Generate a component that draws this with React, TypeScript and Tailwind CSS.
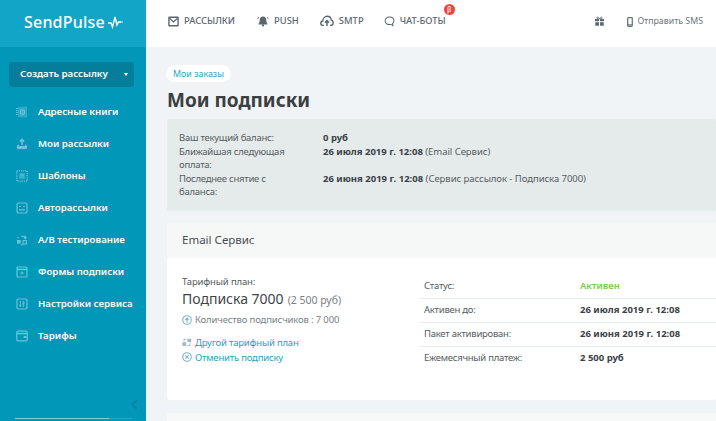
import React from "react";

const F = { fontFamily: '"Noto Sans","Open Sans",sans-serif' };

type IP = { className?: string };
const Svg = ({ w = 12, h = 12, vb = "0 0 12 12", className, children }: any) => (
  <svg width={w} height={h} viewBox={vb} fill="none" stroke="currentColor" className={"shrink-0 " + (className || "")}>{children}</svg>
);

const BookI = ({ className }: IP) => (
  <Svg className={className}><rect x="2" y="0.8" width="9" height="10.4" fill="currentColor" fillOpacity=".45" stroke="none" /><path d="M1 2v8" strokeWidth="1.6" strokeDasharray="1 1" /><circle cx="6.5" cy="6" r="2.2" strokeWidth="1.1" /><circle cx="6.5" cy="6" r=".7" fill="currentColor" stroke="none" /></Svg>
);
const TrayI = ({ className }: IP) => (
  <Svg className={className}><path d="M6 7V1.5M3.8 3.6 6 1.4l2.2 2.2" strokeWidth="1.5" /><path d="M2.4 6 .8 8.2v1.4c0 .8.6 1.4 1.4 1.4h7.6c.8 0 1.4-.6 1.4-1.4V8.2L9.6 6 9 8H3z" fill="currentColor" stroke="none" /></Svg>
);
const TplI = ({ className }: IP) => (
  <Svg className={className}><rect x=".8" y=".8" width="10.4" height="10.4" strokeWidth="1.3" strokeDasharray="1.2 .9" /><rect x="3.2" y="3.2" width="5.6" height="5.6" fill="currentColor" fillOpacity=".55" stroke="none" /><path d="M5 5h3" strokeWidth=".8" /></Svg>
);
const AutoI = ({ className }: IP) => (
  <Svg className={className}><rect x="1" y="1" width="10" height="10" rx="1.4" strokeWidth="1.2" /><path d="M3.2 4.5h1.6M7.2 4.5h1.6M3.2 7.8h5.6" strokeWidth="1.2" /></Svg>
);
const AbI = ({ className }: IP) => (
  <Svg className={className}><rect x="1" y="6" width="3.6" height="3.6" fill="currentColor" stroke="none" /><rect x="7" y="6.6" width="3.4" height="3.4" strokeWidth="1.1" /><path d="M5 2.2h4.2v2M7.8 3.2l1.4 1.4 1.4-1.4M2 4.4V3" strokeWidth="1.1" /><path d="M4.8 10.8h2" strokeWidth="1.1" /></Svg>
);
const FormI = ({ className }: IP) => (
  <Svg className={className}><rect x="1" y="1" width="10" height="10" rx="1" strokeWidth="1.2" /><path d="M1 3.4h10" strokeWidth="1.5" /><path d="M6 5.4v3.2M4.4 7h3.2" strokeWidth="1.1" /></Svg>
);
const SetI = ({ className }: IP) => (
  <Svg className={className}><rect x="1" y="1" width="10" height="10" rx="1.2" strokeWidth="1.2" /><path d="M4.4 3v6M7.6 3v6" strokeWidth="1" /><path d="M3.4 7h2M6.6 5h2" strokeWidth="1.1" /></Svg>
);
const WalletI = ({ className }: IP) => (
  <Svg className={className}><rect x=".8" y="1.2" width="10.4" height="9.6" rx="1" strokeWidth="1.2" /><path d="M.8 3.6h10.4" strokeWidth="1.4" /><rect x="7.6" y="6" width="3" height="2" fill="currentColor" stroke="none" /></Svg>
);

const MailI = ({ className }: IP) => (
  <Svg className={className} w={11} h={11}><rect x="1" y="1.4" width="10" height="9.2" rx=".6" strokeWidth="1.5" /><path d="M1.6 2.4 6 6.6l4.4-4.2" strokeWidth="1.3" /></Svg>
);
const BellI = ({ className }: IP) => (
  <Svg className={className} w={12} h={12}><path d="M6 1.4c-2 0-3.2 1.5-3.2 3.4 0 2-.6 3-1.2 3.9v.8h8.8v-.8c-.6-.9-1.2-1.9-1.2-3.9C9.2 2.9 8 1.4 6 1.4Z" fill="currentColor" stroke="none" /><circle cx="6" cy="10.4" r="1.1" fill="currentColor" stroke="none" /><path d="M1.8 2.2.8 3.8M10.2 2.2l1 1.6" strokeWidth="1" /></Svg>
);
const CloudI = ({ className }: IP) => (
  <Svg className={className} w={14} h={12} vb="0 0 14 12"><path d="M4 10.4H3C1.6 10.4.8 9.4.8 8.2c0-1.2.8-2.1 2-2.2C3 3.4 5 1.2 7.2 1.2c2.2 0 3.8 1.600 4 3.800 1.200.3 2 1.400 2 2.700 0 1.500-1 2.700-2.500 2.700H10" strokeWidth="1.4" /><path d="M7 11V5.600M5 7.600l2-2 2 2" strokeWidth="1.5" /></Svg>
);
const ChatI = ({ className }: IP) => (
  <Svg className={className} w={11} h={11}><path d="M6 1.2C3.2 1.2 1.2 3 1.2 5.3S3.2 9.4 6 9.4c.6 0 1.200-.1 1.700-.2l1.900 1.300-.3-2.200c1-.8 1.500-1.900 1.500-3C10.800 3 8.800 1.200 6 1.200Z" strokeWidth="1.1" /></Svg>
);
const GiftI = ({ className }: IP) => (
  <Svg className={className} w={11} h={11}><rect x="1" y="3.3" width="4.4" height="2.4" fill="currentColor" stroke="none" /><rect x="6.6" y="3.3" width="4.4" height="2.4" fill="currentColor" stroke="none" /><rect x="1.4" y="6.8" width="4" height="3.8" fill="currentColor" stroke="none" /><rect x="6.6" y="6.8" width="4" height="3.8" fill="currentColor" stroke="none" /><path d="M6 3C4.5.6 2.8 1 3 2.2c.1.7 1.500.9 3 .8Zm0 0c1.500-2.400 3.200-2 3-.8-.1.7-1.500.9-3 .8Z" strokeWidth=".9" /></Svg>
);
const PhoneI = ({ className }: IP) => (
  <Svg className={className} w={6} h={10} vb="0 0 6 10"><rect x=".7" y=".7" width="4.6" height="8.600" rx=".7" strokeWidth="1.300" /><path d="M.8 7.900h4.400" strokeWidth="1.200" /></Svg>
);
const UpI = ({ className }: IP) => (
  <Svg className={className} w={10} h={10} vb="0 0 10 10"><circle cx="5" cy="5" r="4.3" strokeWidth="1.1" /><path d="M5 7.600V3.400M3.400 4.800 5 3.100l1.600 1.700" strokeWidth="1.2" /></Svg>
);
const XI = ({ className }: IP) => (
  <Svg className={className} w={10} h={10} vb="0 0 10 10"><circle cx="5" cy="5" r="4.3" strokeWidth="1.1" /><path d="M3.400 3.400l3.200 3.200M6.600 3.400 3.400 6.600" strokeWidth="1.2" /></Svg>
);
const SwapI = ({ className }: IP) => (
  <Svg className={className} w={10} h={10} vb="0 0 10 10"><rect x=".4" y="5.200" width="3.800" height="3.800" fill="currentColor" stroke="none" /><rect x="5.400" y="1.800" width="3.800" height="3.400" fill="currentColor" stroke="none" /><path d="M2 4.400V2.200h2.400M8 6.200v2.200H5.400" strokeWidth="1" /></Svg>
);

const menu: [React.ComponentType<IP>, string][] = [
  [BookI, "Адресные книги"],
  [TrayI, "Мои рассылки"],
  [TplI, "Шаблоны"],
  [AutoI, "Авторассылки"],
  [AbI, "A/B тестирование"],
  [FormI, "Формы подписки"],
  [SetI, "Настройки сервиса"],
  [WalletI, "Тарифы"],
];

const top: [React.ComponentType<IP>, string, string][] = [
  [MailI, "РАССЫЛКИ", "mr-[22px]"],
  [BellI, "PUSH", "mr-[21px]"],
  [CloudI, "SMTP", "mr-[20px]"],
  [ChatI, "ЧАТ-БОТЫ", "mr-[20px]"],
];

const balance: [string, string, string][] = [
  ["Ваш текущий баланс:", "0 руб", ""],
  ["Ближайшая следующая оплата:", "26 июля 2019 г. 12:08", " (Email Сервис)"],
  ["Последнее снятие с баланса:", "26 июня 2019 г. 12:08", " (Сервис рассылок - Подписка 7000)"],
];

const stats: [string, string, boolean][] = [
  ["Статус:", "Активен", true],
  ["Активен до:", "26 июля 2019 г. 12:08", false],
  ["Пакет активирован:", "26 июня 2019 г. 12:08", false],
  ["Ежемесячный платеж:", "2 500 руб", false],
];

export default function App() {
  return (
    <div style={F} className="flex h-[421px] w-[716px] overflow-hidden bg-[#f1f4f6]">
      <aside className="relative flex w-[146px] shrink-0 flex-col bg-[#0097b8]">
        <div className="flex h-[47px] items-center gap-[3px] bg-[#12a5c8] pb-[4px] pl-[24px] text-[16px] font-medium tracking-[0.2px] text-white">
          SendPulse
          <svg width="15" height="14" viewBox="0 0 15 14" fill="none" stroke="white" strokeWidth="1.4"><path d="M0 8h3l1.500 4L7 2l2 8 1.500-3H13" /><circle cx="14" cy="7" r=".8" fill="white" stroke="none" /></svg>
        </div>
        <div className="px-[9px] pt-[15px]">
          <div className="flex h-[25px] w-[125px] items-center justify-between rounded-[3px] bg-[#057e9c] pl-[11px] pr-[6px] text-[9.7px] font-semibold text-white">
            Создать рассылку
            <span className="h-0 w-0 border-x-[2.5px] border-t-[3px] border-x-transparent border-t-white" />
          </div>
        </div>
        <nav className="mt-[9px] flex flex-col">
          {menu.map(([I, t]) => (
            <div key={t} className="flex h-[32px] items-center pl-[16px] text-[9.7px] font-semibold text-white">
              <I className="mr-[10px] text-[#6fc2d8]" />
              {t}
            </div>
          ))}
        </nav>
        <svg width="7" height="11" viewBox="0 0 7 11" fill="none" stroke="#057e9c" strokeWidth="1.6" className="absolute bottom-[11px] right-[8px]"><path d="M6 1 1.500 5.500 6 10" /></svg>
        <div className="absolute bottom-[2px] left-[15px] h-[1px] w-[117px] bg-[#2aa8c6]">
          <div className="h-full w-[94px] bg-[#7fcde0]" />
        </div>
      </aside>
      <div className="flex min-w-0 flex-1 flex-col">
        <header className="flex h-[47px] shrink-0 items-center bg-white pb-[4px] pl-[22px] pr-[13px] text-[#5b6670]">
          {top.map(([I, t, m], i) => (
            <div key={t} className={"relative flex items-center gap-[5px] text-[9.4px] font-medium " + m}>
              <I />
              {t}
              {i === 3 && (
                <span className="absolute -top-[10px] -right-[9px] flex h-[11px] w-[11px] items-center justify-center rounded-full bg-[#f0413f] text-[7px] text-white">β</span>
              )}
            </div>
          ))}
          <GiftI className="ml-auto mr-[22px]" />
          <div className="flex items-center gap-[4px] text-[8.8px] text-[#6b757d]">
            <PhoneI />
            Отправить SMS
          </div>
        </header>
        <main className="min-w-0 flex-1 overflow-hidden pl-[21px] pt-[18px]">
          <span className="-ml-[1px] flex h-[17px] w-fit items-center rounded-full bg-white px-[7px] text-[8.9px] text-[#2ba7c4]">Мои заказы</span>
          <h1 className="mt-[5px] text-[19px] leading-[27px] font-bold text-[#3a3f42]">Мои подписки</h1>
          <section className="mt-[5px] rounded-[3px] bg-[#e5ebeb] pt-[12px] pb-[12px] pl-[12px] text-[9.5px] leading-[13.5px] text-[#555c60]">
            {balance.map(([a, b, c]) => (
              <div key={a} className="flex">
                <div className="w-[144px] shrink-0 pr-[20px] tracking-[-0.25px]">{a}</div>
                <div><b className="font-bold text-[#3a4145]">{b}</b><span className="tracking-[-0.05px]">{c}</span></div>
              </div>
            ))}
          </section>
          <section className="mt-[12px] h-[177px] rounded-[3px] bg-white">
            <div className="flex h-[35px] items-center rounded-t-[3px] bg-[#f6f8f8] pl-[15px] text-[11.5px] text-[#474e52]">Email Сервис</div>
            <div className="flex pt-[16px]">
              <div className="w-[252px] shrink-0 pl-[15px]">
                <div className="text-[9.5px] leading-[15px] tracking-[-0.15px] text-[#555c60]">Тарифный план:</div>
                <div className="flex items-baseline gap-[4px] text-[14px] leading-[20px] text-[#3f464a]">
                  Подписка 7000 <span className="text-[10.5px] text-[#7a8185]">(2 500 руб)</span>
                </div>
                <div className="mt-[3px] flex items-center gap-[3px] text-[9.5px] leading-[14px] tracking-[-0.15px] text-[#7a8185]">
                  <UpI className="text-[#7fb4c7]" /> Количество подписчиков : 7 000
                </div>
                <div className="mt-[8px] flex items-center gap-[3px] text-[9.5px] leading-[15px] tracking-[-0.2px] text-[#2b9fbd]">
                  <SwapI className="text-[#9fbcc8]" /> Другой тарифный план
                </div>
                <div className="flex items-center gap-[3px] text-[9.5px] leading-[15px] tracking-[-0.2px] text-[#2b9fbd]">
                  <XI className="text-[#7fb4c7]" /> Отменить подписку
                </div>
              </div>
              <div className="mt-[1px] min-w-0 flex-1">
                {stats.map(([a, b, g], i) => (
                  <div key={a} className={"flex h-[24px] items-center pl-[5px] text-[9.5px] " + (i < 3 ? "border-b border-[#e8eeee]" : "")}>
                    <div className="w-[156px] shrink-0 tracking-[-0.25px] text-[#555c60]">{a}</div>
                    <div className={g ? "font-semibold text-[#72d24a]" : "font-bold text-[#3a4145]"}>{b}</div>
                  </div>
                ))}
              </div>
            </div>
          </section>
          <section className="mt-[13px] h-[20px] bg-[#f7f9f9]" />
        </main>
      </div>
    </div>
  );
}
